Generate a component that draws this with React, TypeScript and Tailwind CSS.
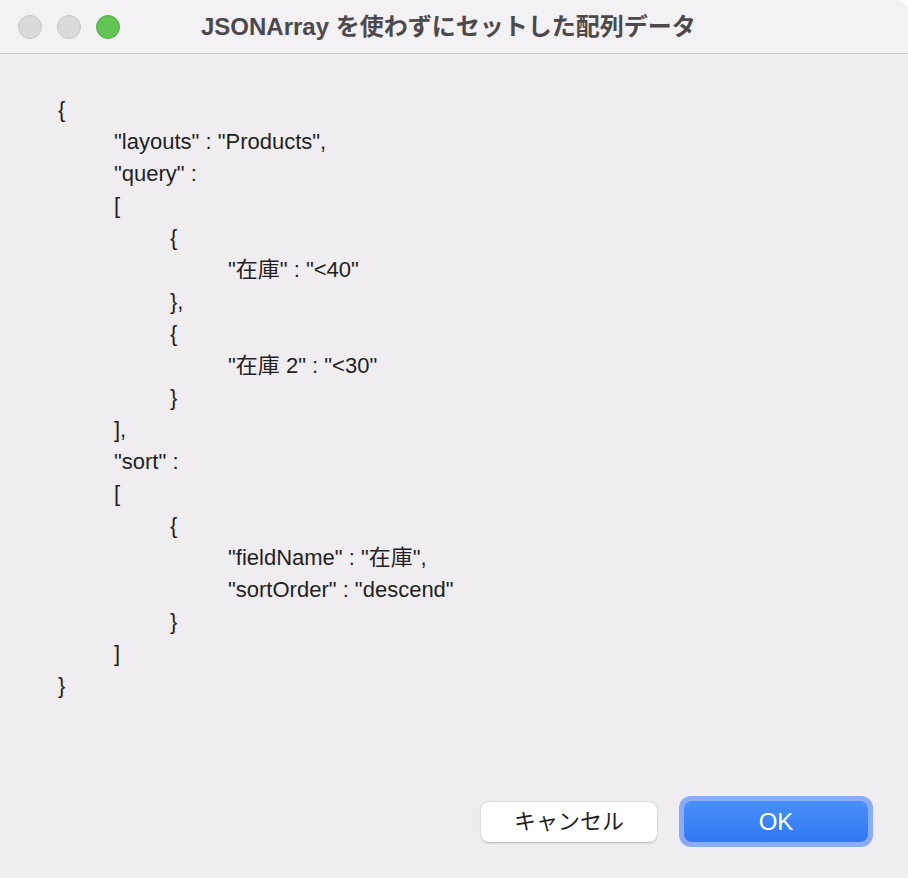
const lines: [number, string][] = [
  [0, "{"],
  [1, '"layouts" : "Products",'],
  [1, '"query" :'],
  [1, "["],
  [2, "{"],
  [3, '"在庫" : "<40"'],
  [2, "},"],
  [2, "{"],
  [3, '"在庫 2" : "<30"'],
  [2, "}"],
  [1, "],"],
  [1, '"sort" :'],
  [1, "["],
  [2, "{"],
  [3, '"fieldName" : "在庫",'],
  [3, '"sortOrder" : "descend"'],
  [2, "}"],
  [1, "]"],
  [0, "}"],
];

const indent = ["pl-0", "pl-[56px]", "pl-[112px]", "pl-[170px]"];

export default function App() {
  return (
    <div
      className="w-[908px] h-[878px] bg-[#f0edf0] flex flex-col overflow-hidden rounded-tr-[12px] text-[#1f1f1f]"
      style={{ fontFamily: '"Liberation Sans", "Noto Sans CJK JP", sans-serif' }}
    >
      <div className="h-[54px] shrink-0 flex items-center border-b border-[#c9c6c9] bg-[#f3f1f4]">
        <div className="flex items-center gap-[15px] pl-[18px]">
          <span className="w-[24px] h-[24px] rounded-full bg-[#dcd9dc] border border-[#c8c5c8]" />
          <span className="w-[24px] h-[24px] rounded-full bg-[#dcd9dc] border border-[#c8c5c8]" />
          <span className="w-[24px] h-[24px] rounded-full bg-[#61c454] border border-[#52ad46]" />
        </div>
        <div className="ml-[81px] text-[24px] font-bold text-[#4b494c]">
          JSONArray を使わずにセットした配列データ
        </div>
      </div>
      <div className="pl-[58px] pt-[40px] text-[22px] leading-[32px]">
        {lines.map(([lv, t], i) => (
          <div key={i} className={indent[lv]}>
            {t}
          </div>
        ))}
      </div>
      <div className="mt-auto mb-[31px] flex justify-end items-center gap-[22px] pr-[35px]">
        <button className="w-[176px] h-[40px] rounded-[8px] bg-white text-[22px] shadow-[0_0.5px_2px_rgba(0,0,0,0.25)]">
          キャンセル
        </button>
        <div className="rounded-[12px] bg-[#8aabf5] p-[5px]">
          <button className="w-[184px] h-[41px] rounded-[8px] bg-gradient-to-b from-[#4a8ff7] to-[#2f78f4] text-white text-[24px]">
            OK
          </button>
        </div>
      </div>
    </div>
  );
}
